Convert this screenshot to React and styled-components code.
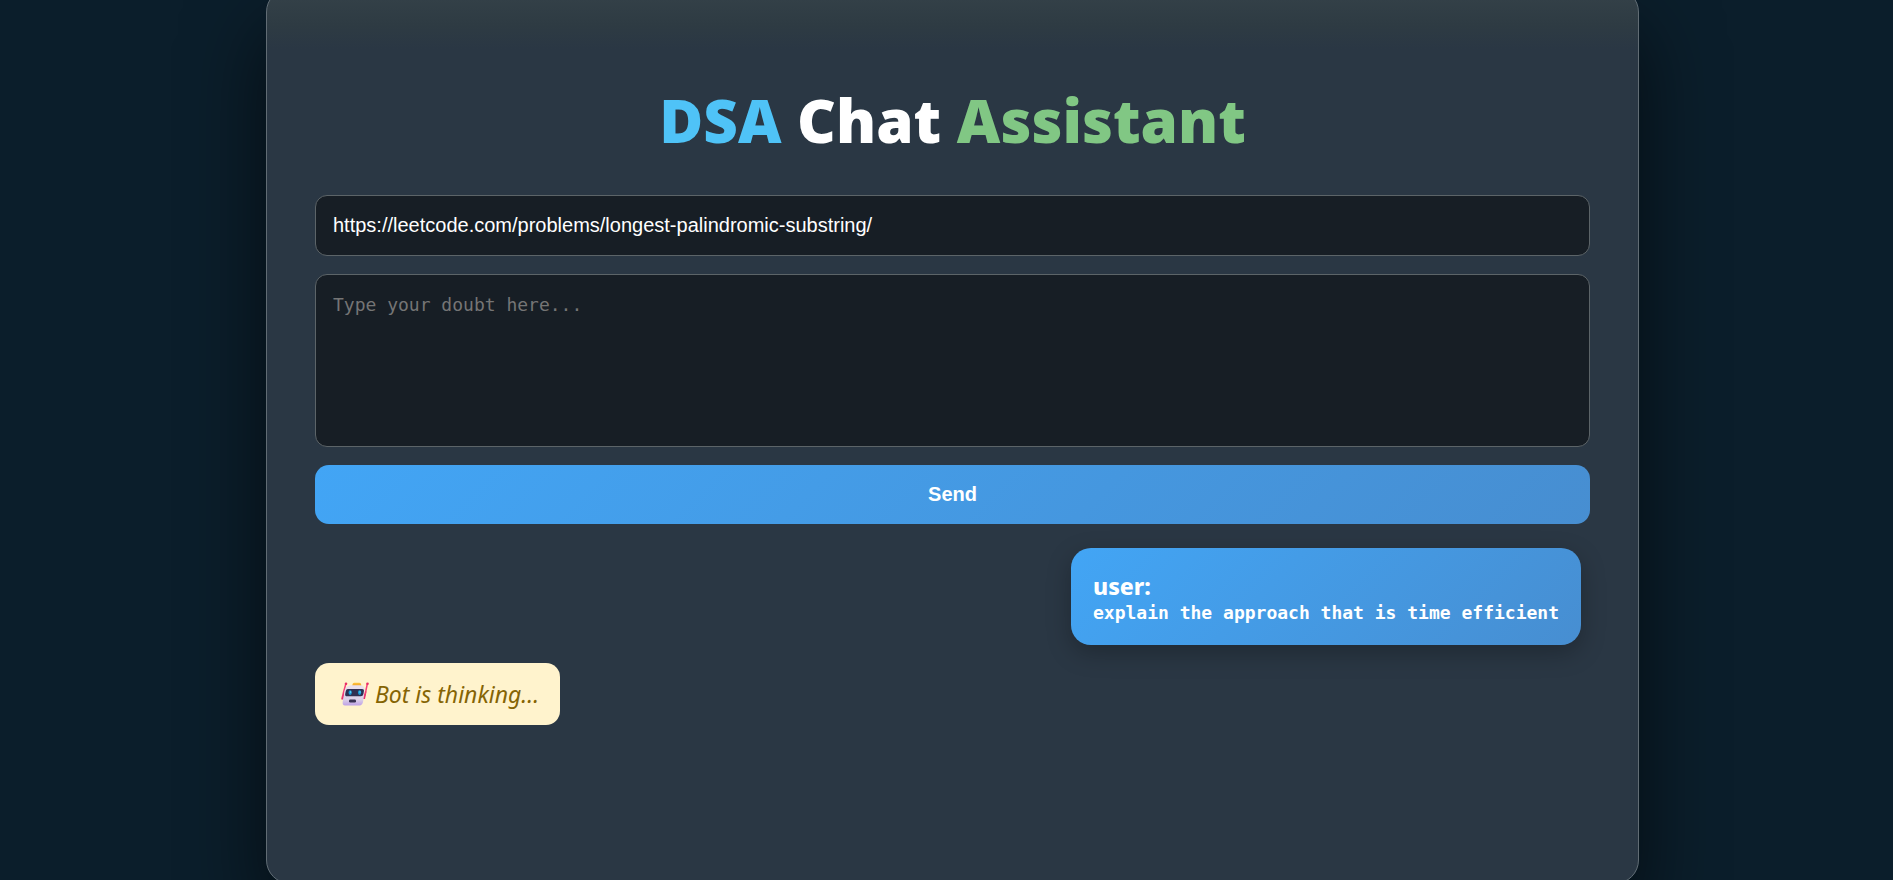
import React, { useState } from "react";
import styled, { createGlobalStyle } from "styled-components";

const GlobalStyle = createGlobalStyle`
  * {
    box-sizing: border-box;
  }

  body {
    margin: 0;
    height: 100vh;
    overflow: hidden;
    background: #0b1e2b;
    color: #ffffff;
    font-family: "Noto Sans", "Open Sans", sans-serif;
  }
`;

const App = () => {
  const [link, setLink] = useState(
    "https://leetcode.com/problems/longest-palindromic-substring/"
  );
  const [doubt, setDoubt] = useState("");

  return (
    <>
      <GlobalStyle />
      <Panel>
        <Title>
          <Accent $color="#4fc3f7">DSA</Accent> Chat{" "}
          <Accent $color="#81c784">Assistant</Accent>
        </Title>
        <Form onSubmit={e => e.preventDefault()}>
          <LinkInput
            type="text"
            aria-label="Problem link"
            value={link}
            onChange={e => setLink(e.target.value)}
          />
          <DoubtInput
            aria-label="Your doubt"
            placeholder="Type your doubt here..."
            value={doubt}
            onChange={e => setDoubt(e.target.value)}
          />
          <SendButton type="submit">Send</SendButton>
        </Form>
        <Messages>
          <UserMessage>
            <Sender>user:</Sender>
            <MessageText>
              explain the approach that is time efficient
            </MessageText>
          </UserMessage>
          <Thinking>
            <RobotIcon />
            Bot is thinking...
          </Thinking>
        </Messages>
      </Panel>
    </>
  );
};

const RobotIcon = () => (
  <Robot viewBox="0 0 28 24" aria-hidden="true">
    <defs>
      <linearGradient id="face" x1="0" y1="0" x2="0" y2="1">
        <stop offset="0" stopColor="#e9e0ef" />
        <stop offset="0.7" stopColor="#dcd0e8" />
        <stop offset="1" stopColor="#bda0e6" />
      </linearGradient>
      <linearGradient id="cap" x1="0" y1="0" x2="0" y2="1">
        <stop offset="0" stopColor="#ffc53d" />
        <stop offset="1" stopColor="#ee9a25" />
      </linearGradient>
    </defs>
    <path
      d="M4.8 2 L2.6 10 L1 16.5 M26.3 2 L24.8 9 L22.8 16"
      fill="none"
      stroke="#f5427b"
      strokeWidth="1.5"
      strokeLinecap="round"
    />
    <circle cx="5" cy="1.7" r="1.3" fill="#e92d69" />
    <circle cx="26.5" cy="1.7" r="1.3" fill="#e92d69" />
    <path d="M3.4 9.5 L0.4 17.5 L2.6 17.5 Z" fill="#e5316d" />
    <path d="M25.8 8.5 L24 17 L22 17 Z" fill="#e5316d" />
    <path
      d="M11.2 4.2 Q11.5 0.8 13.2 0.8 H18.4 Q20.4 0.8 20.2 4.2 Z"
      fill="url(#cap)"
    />
    <path
      d="M10 3.3 H19 Q23 3.6 23.6 7 L22.2 19 Q21.6 23.4 18.5 23.6 H4 Q1.1 23.4 1.7 19.6 L3.9 8 Q5.1 4 10 3.3 Z"
      fill="url(#face)"
    />
    <path
      d="M6.8 7 H21 Q23.3 7 22.9 9.3 L22.4 12 Q22 14.3 19.8 14.3 H6 Q3.8 14.3 4.2 12 L4.8 9 Q5.1 7 6.8 7 Z"
      fill="#303052"
    />
    <ellipse cx="9.2" cy="10.6" rx="1.6" ry="2.3" fill="#179bd7" />
    <ellipse cx="18.6" cy="10.6" rx="1.6" ry="2.3" fill="#179bd7" />
    <ellipse cx="9.6" cy="10" rx="0.6" ry="1.1" fill="#62d4f5" />
    <ellipse cx="19" cy="10" rx="0.6" ry="1.1" fill="#62d4f5" />
    <rect x="8" y="17.6" width="7" height="2.8" rx="1.2" fill="#393354" />
  </Robot>
);

const Panel = styled.main`
  display: flex;
  flex-direction: column;
  min-height: calc(100vh + 16px);
  margin: -12px 254px 0 266px;
  padding: 95px 48px 48px;
  border: 1px solid #616c74;
  border-radius: 24px;
  background: linear-gradient(#354249, #2e3b43 36px, #2a3744 60px);
  box-shadow: 0 40px 80px rgba(0, 0, 0, 0.6);
`;

const Title = styled.h1`
  margin: 0 0 39px;
  font-size: 60px;
  font-weight: 900;
  line-height: 72px;
  text-align: center;
`;

const Accent = styled.span`
  color: ${props => props.$color};
`;

const Form = styled.form`
  display: flex;
  flex-direction: column;
  gap: 18px;
`;

const LinkInput = styled.input`
  height: 61px;
  padding: 0 17px;
  border: 1px solid #5c6468;
  border-radius: 12px;
  outline: none;
  background: #171e25;
  color: #ffffff;
  font-family: "Liberation Sans", Arial, sans-serif;
  font-size: 20px;
`;

const DoubtInput = styled.textarea`
  height: 173px;
  padding: 18px 17px;
  border: 1px solid #5c6468;
  border-radius: 12px;
  outline: none;
  resize: none;
  background: #171e25;
  color: #ffffff;
  font-family: "DejaVu Sans Mono", monospace;
  font-size: 18px;
  line-height: 24px;

  &::placeholder {
    color: #757575;
  }
`;

const SendButton = styled.button`
  height: 59px;
  border: none;
  border-radius: 14px;
  background: linear-gradient(135deg, #42a5f5, #478ed1);
  color: #ffffff;
  font-family: "Liberation Sans", Arial, sans-serif;
  font-size: 20px;
  font-weight: 700;
  cursor: pointer;
`;

const Messages = styled.section`
  display: flex;
  flex: 1;
  flex-direction: column;
  gap: 18px;
  margin-top: 24px;
`;

const UserMessage = styled.div`
  align-self: flex-end;
  margin-right: 9px;
  padding: 24px 22px 20px;
  border-radius: 20px;
  background: linear-gradient(135deg, #42a5f5, #478ed1);
  box-shadow: 0 8px 24px rgba(0, 0, 0, 0.25);
`;

const Sender = styled.strong`
  display: block;
  font-size: 23px;
  font-weight: 800;
  line-height: 29px;
`;

const MessageText = styled.p`
  margin: 0;
  font-family: "DejaVu Sans Mono", monospace;
  font-size: 18px;
  font-weight: 700;
  line-height: 24px;
`;

const Thinking = styled.div`
  display: flex;
  align-items: center;
  align-self: flex-start;
  gap: 6px;
  height: 62px;
  padding: 0 21px 0 26px;
  border-radius: 14px;
  background: #fff3cd;
  color: #856404;
  font-size: 23px;
  font-style: italic;
`;

const Robot = styled.svg`
  width: 28px;
  height: 24px;
`;

export default App;
